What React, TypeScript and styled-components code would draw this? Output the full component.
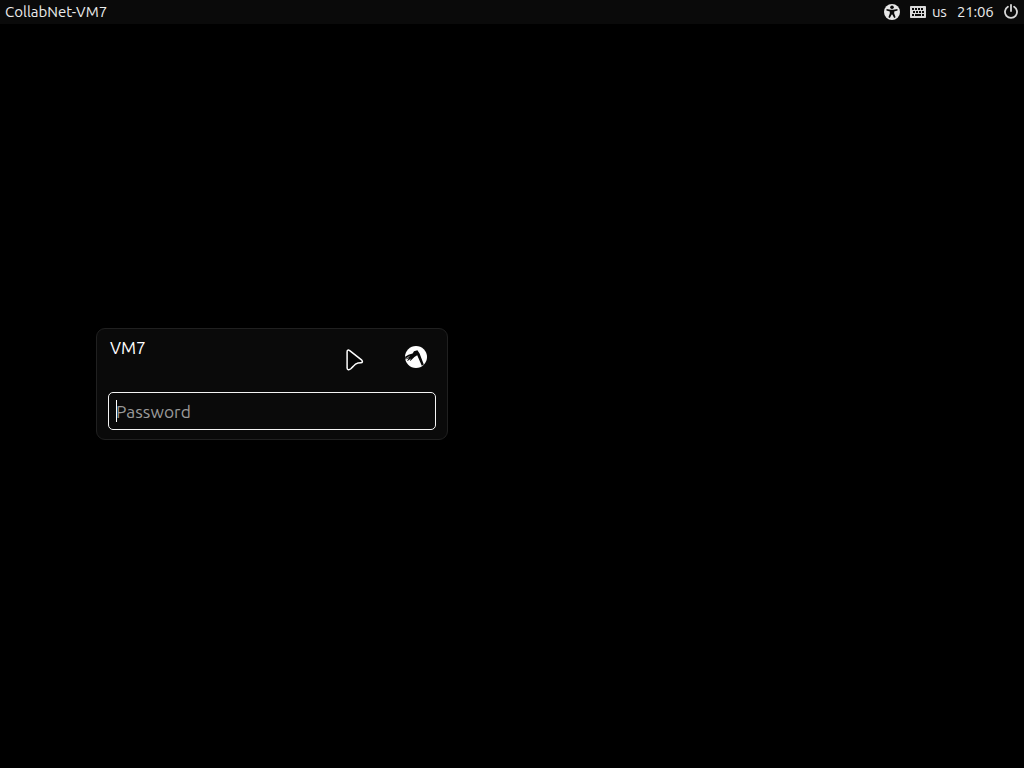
import { useEffect, useRef, useState } from "react";
import { createGlobalStyle, styled } from "styled-components";

const App = () => {
    const [password, setPassword] = useState<string>("");

    // focus the password field on load
    const passwordRef = useRef<HTMLInputElement>(null);

    useEffect(() => {
        if (passwordRef.current) {
            passwordRef.current.focus();
        }
    }, []);

    const passwordChangeHandler = (e: React.ChangeEvent<HTMLInputElement>) => {
        setPassword(e.target.value);
    };

    return (
        <Screen>
            <GlobalStyle />
            <Panel>
                <PanelText $spacing="0px">CollabNet-VM7</PanelText>
                <Indicators>
                    <AccessibilityIcon />
                    <Layout>
                        <KeyboardIcon />
                        <LayoutName $spacing="-0.3px">us</LayoutName>
                    </Layout>
                    <Clock $spacing="-0.2px">21:06</Clock>
                    <PowerIcon />
                </Indicators>
            </Panel>
            <LoginBox>
                <UserRow>
                    <UserName>VM7</UserName>
                    <SessionIcon />
                </UserRow>
                <PasswordField>
                    {password === "" && <Caret />}
                    <input
                        type="password"
                        placeholder="Password"
                        value={password}
                        onChange={passwordChangeHandler}
                        ref={passwordRef}
                    />
                </PasswordField>
                <Pointer />
            </LoginBox>
        </Screen>
    );
};

const AccessibilityIcon = () => (
    <svg width="16" height="16" viewBox="0 0 16 16">
        <circle cx="8" cy="8" r="8" fill="#e6e6e6" />
        <circle cx="8" cy="3.2" r="1.8" fill="#0a0a0a" />
        <path
            d="M2.6 5L6.6 5.8H9.4L13.4 5L13.6 6.6L10.2 7.6V9.4L11.6 13.2L10.2 13.9L8.3 10.4H7.7L5.8 13.9L4.4 13.2L5.8 9.4V7.6L2.4 6.6Z"
            fill="#0a0a0a"
        />
    </svg>
);

const KeyboardIcon = () => (
    <svg width="16" height="12" viewBox="0 0 16 12">
        <rect width="16" height="12" rx="0.8" fill="#dadada" />
        <path
            d="M2 3H14M3 6H14"
            stroke="#0a0a0a"
            strokeWidth="2"
            strokeDasharray="2 1"
        />
        <path d="M2 9H4M5 9H11M12 9H14" stroke="#0a0a0a" strokeWidth="2" />
    </svg>
);

const PowerIcon = () => (
    <svg width="16" height="16" viewBox="0 0 16 16" fill="none" stroke="#d8d8d8">
        <path d="M4.9 2.8A6 6 0 1 0 11.1 2.8" strokeWidth="1.8" strokeLinecap="round" />
        <path d="M8 1V7" strokeWidth="1.8" strokeLinecap="round" />
    </svg>
);

const SessionIcon = () => (
    <svg width="22" height="22" viewBox="0 0 22 22">
        <circle cx="11" cy="11" r="11" fill="#fff" />
        <path
            d="M0.1 10.8L3.5 8.8L7.6 7.4L9 5.3L12.4 4.2L14.6 7.4L18.8 18.6L16.8 19.8L12.2 9.2L9.4 10.9L5.6 14.8L4.8 14.4L6 12.5L2.6 15L2.2 14.4L4 12.2L0.4 13.6Z"
            fill="#0a0a0a"
        />
        <path d="M1 12.6L4.5 10.4" stroke="#fff" strokeWidth="0.6" />
    </svg>
);

const Pointer = () => (
    <PointerSvg width="20" height="24" viewBox="0 0 20 24">
        <path
            d="M2.1 3.8C2.1 2 3.4 1.5 4.7 2.7L16.8 12.2C18 13.3 17.4 14.7 15.9 14.7L13 15.1C10.6 15.5 9.6 16.6 8.2 18.4L5.8 20.8C4 22.4 2.1 21.8 2.1 20Z"
            fill="#050505"
            stroke="#fff"
            strokeWidth="1.5"
            strokeLinejoin="round"
        />
    </PointerSvg>
);

const GlobalStyle = createGlobalStyle`
    body {
        margin: 0;
        background-color: #000;
    }
    * {
        box-sizing: border-box;
    }
    svg {
        display: block;
        flex-shrink: 0;
    }
`;

const Screen = styled.div`
    width: 100%;
    height: 100vh;
    overflow: hidden;
    background-color: #000;
    color: #ececec;
    font-family: Ubuntu, "Noto Sans", sans-serif;
`;

const Panel = styled.header`
    height: 24px;
    padding: 0 5px;
    display: flex;
    align-items: center;
    justify-content: space-between;
    background-color: #0a0a0a;
`;

const PanelText = styled.span<{ $spacing: string }>`
    font-size: 15px;
    line-height: 24px;
    letter-spacing: ${(props) => props.$spacing};
`;

const Indicators = styled.div`
    display: flex;
    align-items: center;
    gap: 10px;
`;

const Layout = styled.div`
    display: flex;
    align-items: center;
    gap: 6px;
`;

const LayoutName = styled(PanelText)`
    width: 15px;
`;

const Clock = styled(PanelText)`
    width: 36px;
`;

const LoginBox = styled.form`
    position: relative;
    width: 352px;
    height: 112px;
    margin: 304px 0 0 96px;
    padding: 9px 11px;
    display: flex;
    flex-direction: column;
    justify-content: space-between;
    background-color: #0a0a0a;
    border: 1px solid #202020;
    border-radius: 9px;
`;

const UserRow = styled.div`
    display: flex;
    justify-content: space-between;
    padding: 0 9px 0 2px;

    svg {
        margin-top: 8px;
    }
`;

const UserName = styled.span`
    color: #fff;
    font-size: 17.33px;
    line-height: 20px;
`;

const PasswordField = styled.div`
    height: 38px;
    display: flex;
    align-items: center;
    padding: 0 7px;
    border: 1px solid #f4f4f4;
    border-radius: 5px;

    input {
        flex: 1;
        min-width: 0;
        height: 36px;
        padding: 1px 0 0;
        color: #fff;
        font-family: inherit;
        font-size: 17.33px;
        letter-spacing: 0.06px;
        background: none;
        border: none;
        outline: none;
        caret-color: transparent;
    }
    input::placeholder {
        color: #9a9a9a;
        opacity: 1;
    }
`;

const Caret = styled.span`
    width: 1px;
    height: 22px;
    margin-right: -1px;
    background-color: #fff;
`;

const PointerSvg = styled.svg`
    position: absolute;
    left: 248px;
    top: 19px;
`;

export default App;
